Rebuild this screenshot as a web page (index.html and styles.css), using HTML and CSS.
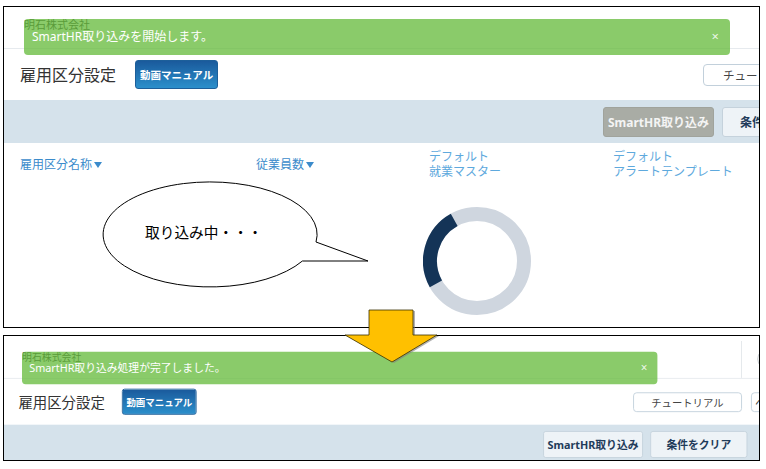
FILE: index.html
```html
<!DOCTYPE html>
<html lang="ja">
<head>
    <meta charset="UTF-8">
    <meta name="viewport" content="width=device-width, initial-scale=1.0">
    <title>SmartHR取り込み</title>
    <link rel="stylesheet" href="styles.css">
</head>
<body>
    <div class="sheet">
        <!-- 取り込み開始時 -->
        <section class="shot shot-start">
            <div class="app">
                <header class="app-header">
                    <span class="company">明石株式会社</span>
                    <div class="header-user"><span class="avatar"></span></div>
                </header>
                <div class="toast">
                    <span class="toast-text">SmartHR取り込みを開始します。</span>
                    <span class="toast-close">×</span>
                </div>
                <div class="title-row">
                    <h1 class="page-title">雇用区分設定</h1>
                    <button class="btn-manual">動画マニュアル</button>
                    <button class="btn-outline btn-tutorial">チュートリアル</button>
                    <button class="btn-outline btn-help">ヘルプ</button>
                </div>
                <div class="toolbar">
                    <button class="btn-tool" disabled>SmartHR取り込み</button>
                    <button class="btn-tool">条件をクリア</button>
                </div>
                <div class="table-head">
                    <div class="col col-name sort">雇用区分名称<span class="caret"></span></div>
                    <div class="col col-count sort">従業員数<span class="caret"></span></div>
                    <div class="col col-master">デフォルト<br>就業マスター</div>
                    <div class="col col-alert">デフォルト<br>アラートテンプレート</div>
                </div>
            </div>

            <div class="spinner">
                <svg viewBox="0 0 108 108" width="108" height="108">
                    <circle cx="54" cy="54" r="47" fill="none" stroke="#cfd6df" stroke-width="14"/>
                    <path d="M31.2,12.9 A47,47 0 0,0 12.9,76.8" fill="none" stroke="#143457" stroke-width="14"/>
                </svg>
            </div>

            <svg class="bubble" viewBox="96 176 280 120" width="280" height="120">
                <path d="M316,242 L368,261 L302.4,261 A107,52.5 0 1,1 316,242 Z" fill="#fff" stroke="#000" stroke-width="1"/>
                <text x="145" y="238" class="bubble-text">取り込み中・・・</text>
            </svg>
        </section>

        <!-- 取り込み完了後 -->
        <section class="shot shot-done">
            <div class="app">
                <header class="app-header">
                    <span class="company">明石株式会社</span>
                    <div class="header-user"><span class="avatar"></span></div>
                </header>
                <div class="toast">
                    <span class="toast-text">SmartHR取り込み処理が完了しました。</span>
                    <span class="toast-close">×</span>
                </div>
                <div class="title-row">
                    <h1 class="page-title">雇用区分設定</h1>
                    <button class="btn-manual">動画マニュアル</button>
                    <button class="btn-outline btn-tutorial">チュートリアル</button>
                    <button class="btn-outline btn-help">ヘルプ</button>
                </div>
                <div class="toolbar">
                    <button class="btn-tool">SmartHR取り込み</button>
                    <button class="btn-tool">条件をクリア</button>
                </div>
                <div class="table-head">
                    <div class="col col-name sort">雇用区分名称<span class="caret"></span></div>
                    <div class="col col-count sort">従業員数<span class="caret"></span></div>
                    <div class="col col-master">デフォルト<br>就業マスター</div>
                    <div class="col col-alert">デフォルト<br>アラートテンプレート</div>
                </div>
            </div>
        </section>

        <svg class="arrow" viewBox="340 305 105 62" width="105" height="62">
            <polygon points="371,311 415,311 415,336 439,336 394,363 347,336 371,336" fill="#7f7f7f" opacity="0.6"/>
            <polygon points="369,310 413,310 413,335 437,335 392,362 345,335 369,335" fill="#ffc000" stroke="#3a3000" stroke-width="0.8"/>
        </svg>
    </div>
</body>
</html>
```

FILE: styles.css
```css
* {
    box-sizing: border-box;
}

body {
    margin: 0;
    background: #fff;
    font-family: "Noto Sans", "Noto Sans CJK JP", sans-serif;
    color: #333;
}

button {
    font-family: inherit;
    cursor: pointer;
}

.sheet {
    position: relative;
    padding: 6px 0 0 3px;
}

.shot {
    position: relative;
    width: 757px;
    border: 1px solid #000;
    overflow: hidden;
    background: #fff;
}

.shot-start {
    height: 322px;
}

.shot-done {
    height: 126px;
    margin-top: 7px;
}

.app {
    position: relative;
    width: 880px;
}

.shot-done .app {
    transform: translateY(5px) scale(0.9);
    transform-origin: 0 0;
}

/* ヘッダー */
.app-header {
    display: flex;
    height: 42px;
    border-bottom: 1px solid #e6eaee;
}

.company {
    padding: 11px 0 0 20px;
    font-size: 11px;
    line-height: 14px;
    color: #3e3e3e;
}

.header-user {
    margin-left: auto;
    border-left: 1px solid #e3e7ea;
    padding: 8px 19px 0 17px;
}

.avatar {
    display: block;
    width: 24px;
    height: 24px;
    border: 1px solid #c3c8cc;
    border-radius: 50%;
}

/* 通知 */
.toast {
    position: absolute;
    left: 20px;
    top: 12px;
    width: 706px;
    height: 36px;
    display: flex;
    align-items: center;
    justify-content: space-between;
    padding: 0 11px 2px 8px;
    border-radius: 4px;
    background: rgba(99, 186, 56, 0.75);
    color: #fff;
    font-size: 12px;
    line-height: 15px;
}

.toast-close {
    font-size: 13px;
    color: rgba(255, 255, 255, 0.85);
}

/* タイトル行 */
.title-row {
    display: flex;
    align-items: center;
    height: 51px;
    padding: 0 6px 0 16px;
}

.page-title {
    margin: 0 19px 0 0;
    font-size: 16px;
    font-weight: normal;
    line-height: 20px;
    color: #333;
}

.btn-manual {
    height: 29px;
    padding: 0 4px;
    border: 1px solid #1d5f9a;
    border-radius: 3px;
    background: linear-gradient(#1a5a9c, #2b8fcb);
    color: #fff;
    font-size: 10.5px;
    font-weight: 700;
}

.btn-outline {
    height: 22px;
    border: 1px solid #c2d0db;
    border-radius: 4px;
    background: #fff;
    color: #444;
    font-size: 11.5px;
}

.btn-tutorial {
    margin-left: auto;
    padding: 0 19px;
}

.btn-help {
    margin-left: 10px;
    padding: 0 4px;
}

/* ツールバー */
.toolbar {
    display: flex;
    align-items: center;
    justify-content: flex-end;
    gap: 8px;
    height: 43px;
    padding-right: 54px;
    background: #d5e2eb;
}

.btn-tool {
    min-width: 108px;
    height: 30px;
    padding: 0 4px;
    border: 1px solid #c5d2dc;
    border-radius: 3px;
    background: #eef3f7;
    color: #1f3b5a;
    font-size: 12px;
    font-weight: 700;
}

.btn-tool:disabled {
    background: #a9aca5;
    border-color: #a0a39c;
    color: #f4f4f4;
    cursor: default;
}

/* 一覧ヘッダー */
.table-head {
    display: flex;
    align-items: center;
    height: 42px;
    padding-left: 16px;
    font-size: 12px;
    line-height: 15px;
    color: #5ea9dd;
}

.col-name {
    width: 236px;
}

.col-count {
    width: 173px;
}

.col-master {
    width: 184px;
}

.sort {
    color: #3b8bcb;
}

.caret {
    display: inline-block;
    margin-left: 2px;
    vertical-align: middle;
    border-left: 4.5px solid transparent;
    border-right: 4.5px solid transparent;
    border-top: 6px solid currentColor;
}

/* ローディング */
.spinner {
    position: absolute;
    left: 419px;
    top: 200px;
    width: 108px;
    height: 108px;
}

.spinner svg {
    display: block;
}

/* 吹き出し */
.bubble {
    position: absolute;
    left: 92px;
    top: 169px;
}

.bubble-text {
    font-family: "Noto Sans CJK JP", sans-serif;
    font-size: 14.7px;
    fill: #000;
}

/* 矢印 */
.arrow {
    position: absolute;
    left: 340px;
    top: 305px;
}
```
